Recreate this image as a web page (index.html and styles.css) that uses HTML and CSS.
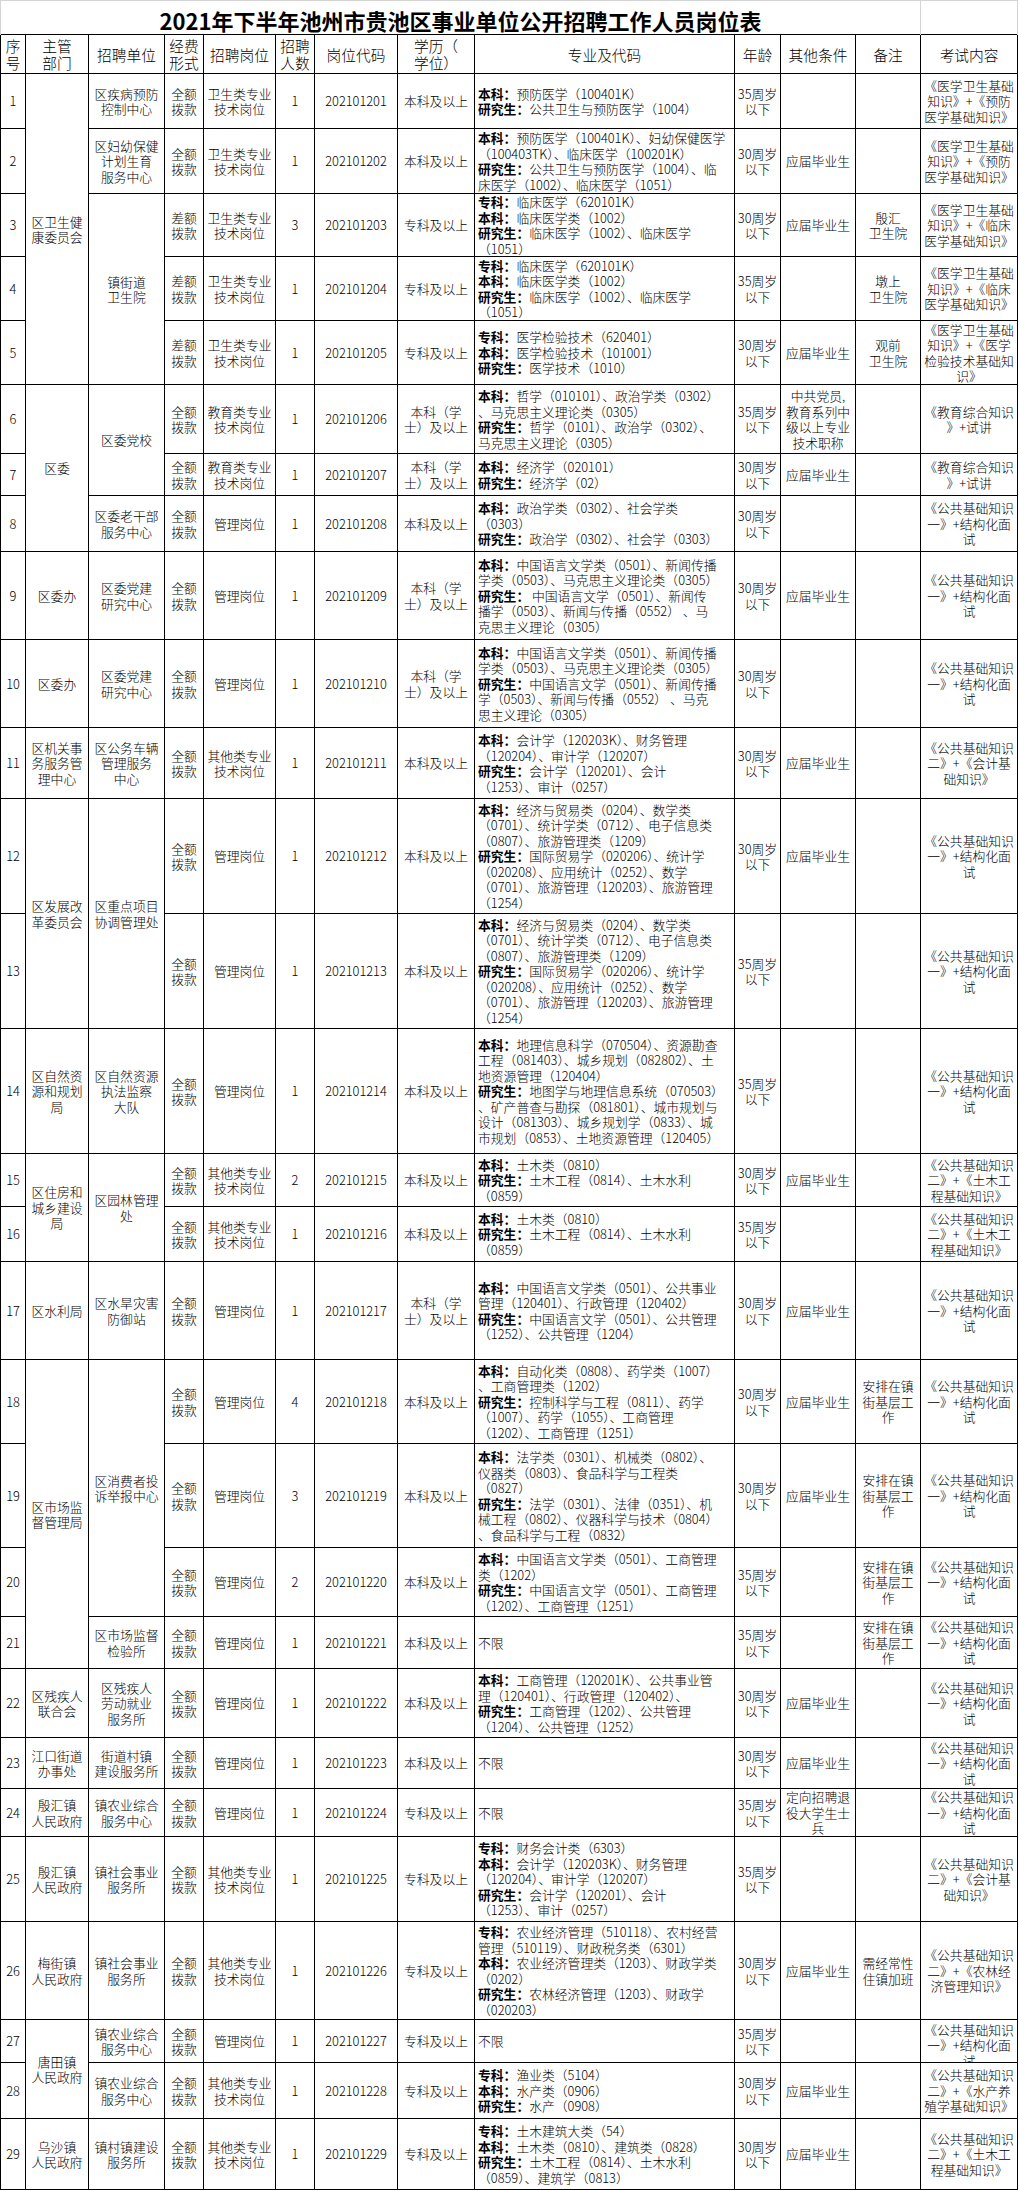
FILE: index.html
```html
<!DOCTYPE html>
<html lang="zh-CN">
<head>
<meta charset="utf-8">
<title>2021年下半年池州市贵池区事业单位公开招聘工作人员岗位表</title>
<link rel="stylesheet" href="styles.css">
</head>
<body>
<table class="sheet">
<colgroup>
<col class="c-no"><col class="c-dept"><col class="c-unit"><col class="c-fund"><col class="c-post"><col class="c-num"><col class="c-code"><col class="c-edu"><col class="c-major"><col class="c-age"><col class="c-other"><col class="c-note"><col class="c-exam">
</colgroup>
<thead>
<tr class="title-row"><td class="title" colspan="12">2021年下半年池州市贵池区事业单位公开招聘工作人员岗位表</td><td class="title-gap"></td></tr>
<tr class="head-row"><th>序<br>号</th><th>主管<br>部门</th><th>招聘单位</th><th>经费<br>形式</th><th>招聘岗位</th><th>招聘<br>人数</th><th>岗位代码</th><th>学历（<br>学位）</th><th>专业及代码</th><th>年龄</th><th>其他条件</th><th>备注</th><th>考试内容</th></tr>
</thead>
<tbody>
<tr><td>1</td><td rowspan="5">区卫生健<br>康委员会</td><td>区疾病预防<br>控制中心</td><td>全额<br>拨款</td><td>卫生类专业<br>技术岗位</td><td>1</td><td>202101201</td><td>本科及以上</td><td class="m"><b>本科：</b>预防医学（100401K）<br><b>研究生：</b>公共卫生与预防医学（1004）</td><td>35周岁<br>以下</td><td></td><td></td><td>《医学卫生基础<br>知识》+《预防<br>医学基础知识》</td></tr>
<tr><td>2</td><td>区妇幼保健<br>计划生育<br>服务中心</td><td>全额<br>拨款</td><td>卫生类专业<br>技术岗位</td><td>1</td><td>202101202</td><td>本科及以上</td><td class="m"><b>本科：</b>预防医学（100401K）、妇幼保健医学<br>（100403TK）、临床医学（100201K）<br><b>研究生：</b>公共卫生与预防医学（1004）、临<br>床医学（1002）、临床医学（1051）</td><td>30周岁<br>以下</td><td>应届毕业生</td><td></td><td>《医学卫生基础<br>知识》+《预防<br>医学基础知识》</td></tr>
<tr><td>3</td><td rowspan="3">镇街道<br>卫生院</td><td>差额<br>拨款</td><td>卫生类专业<br>技术岗位</td><td>3</td><td>202101203</td><td>专科及以上</td><td class="m"><b>专科：</b>临床医学（620101K）<br><b>本科：</b>临床医学类（1002）<br><b>研究生：</b>临床医学（1002）、临床医学<br>（1051）</td><td>30周岁<br>以下</td><td>应届毕业生</td><td>殷汇<br>卫生院</td><td>《医学卫生基础<br>知识》+《临床<br>医学基础知识》</td></tr>
<tr><td>4</td><td>差额<br>拨款</td><td>卫生类专业<br>技术岗位</td><td>1</td><td>202101204</td><td>专科及以上</td><td class="m"><b>专科：</b>临床医学（620101K）<br><b>本科：</b>临床医学类（1002）<br><b>研究生：</b>临床医学（1002）、临床医学<br>（1051）</td><td>35周岁<br>以下</td><td></td><td>墩上<br>卫生院</td><td>《医学卫生基础<br>知识》+《临床<br>医学基础知识》</td></tr>
<tr><td>5</td><td>差额<br>拨款</td><td>卫生类专业<br>技术岗位</td><td>1</td><td>202101205</td><td>专科及以上</td><td class="m"><b>专科：</b>医学检验技术（620401）<br><b>本科：</b>医学检验技术（101001）<br><b>研究生：</b>医学技术（1010）</td><td>30周岁<br>以下</td><td>应届毕业生</td><td>观前<br>卫生院</td><td>《医学卫生基础<br>知识》+《医学<br>检验技术基础知<br>识》</td></tr>
<tr><td>6</td><td rowspan="3">区委</td><td rowspan="2">区委党校</td><td>全额<br>拨款</td><td>教育类专业<br>技术岗位</td><td>1</td><td>202101206</td><td>本科（学<br>士）及以上</td><td class="m"><b>本科：</b>哲学（010101）、政治学类（0302）<br>、马克思主义理论类（0305）<br><b>研究生：</b>哲学（0101）、政治学（0302）、<br>马克思主义理论（0305）</td><td>35周岁<br>以下</td><td>中共党员,<br>教育系列中<br>级以上专业<br>技术职称</td><td></td><td>《教育综合知识<br>》+试讲</td></tr>
<tr><td>7</td><td>全额<br>拨款</td><td>教育类专业<br>技术岗位</td><td>1</td><td>202101207</td><td>本科（学<br>士）及以上</td><td class="m"><b>本科：</b>经济学（020101）<br><b>研究生：</b>经济学（02）</td><td>30周岁<br>以下</td><td>应届毕业生</td><td></td><td>《教育综合知识<br>》+试讲</td></tr>
<tr><td>8</td><td>区委老干部<br>服务中心</td><td>全额<br>拨款</td><td>管理岗位</td><td>1</td><td>202101208</td><td>本科及以上</td><td class="m"><b>本科：</b>政治学类（0302）、社会学类<br>（0303）<br><b>研究生：</b>政治学（0302）、社会学（0303）</td><td>30周岁<br>以下</td><td></td><td></td><td>《公共基础知识<br>一》+结构化面<br>试</td></tr>
<tr><td>9</td><td>区委办</td><td>区委党建<br>研究中心</td><td>全额<br>拨款</td><td>管理岗位</td><td>1</td><td>202101209</td><td>本科（学<br>士）及以上</td><td class="m"><b>本科：</b>中国语言文学类（0501）、新闻传播<br>学类（0503）、马克思主义理论类（0305）<br><b>研究生：</b> 中国语言文学（0501）、新闻传<br>播学（0503）、新闻与传播（0552） 、马<br>克思主义理论（0305）</td><td>30周岁<br>以下</td><td>应届毕业生</td><td></td><td>《公共基础知识<br>一》+结构化面<br>试</td></tr>
<tr><td>10</td><td>区委办</td><td>区委党建<br>研究中心</td><td>全额<br>拨款</td><td>管理岗位</td><td>1</td><td>202101210</td><td>本科（学<br>士）及以上</td><td class="m"><b>本科：</b>中国语言文学类（0501）、新闻传播<br>学类（0503）、马克思主义理论类（0305）<br><b>研究生：</b>中国语言文学（0501）、新闻传播<br>学（0503）、新闻与传播（0552） 、马克<br>思主义理论（0305）</td><td>30周岁<br>以下</td><td></td><td></td><td>《公共基础知识<br>一》+结构化面<br>试</td></tr>
<tr><td>11</td><td>区机关事<br>务服务管<br>理中心</td><td>区公务车辆<br>管理服务<br>中心</td><td>全额<br>拨款</td><td>其他类专业<br>技术岗位</td><td>1</td><td>202101211</td><td>本科及以上</td><td class="m"><b>本科：</b>会计学（120203K）、财务管理<br>（120204）、审计学（120207）<br><b>研究生：</b>会计学（120201）、会计<br>（1253）、审计（0257）</td><td>30周岁<br>以下</td><td>应届毕业生</td><td></td><td>《公共基础知识<br>二》+《会计基<br>础知识》</td></tr>
<tr><td>12</td><td rowspan="2">区发展改<br>革委员会</td><td rowspan="2">区重点项目<br>协调管理处</td><td>全额<br>拨款</td><td>管理岗位</td><td>1</td><td>202101212</td><td>本科及以上</td><td class="m"><b>本科：</b>经济与贸易类（0204）、数学类<br>（0701）、统计学类（0712）、电子信息类<br>（0807）、旅游管理类（1209）<br><b>研究生：</b>国际贸易学（020206）、统计学<br>（020208）、应用统计（0252）、数学<br>（0701）、旅游管理（120203）、旅游管理<br>（1254）</td><td>30周岁<br>以下</td><td>应届毕业生</td><td></td><td>《公共基础知识<br>一》+结构化面<br>试</td></tr>
<tr><td>13</td><td>全额<br>拨款</td><td>管理岗位</td><td>1</td><td>202101213</td><td>本科及以上</td><td class="m"><b>本科：</b>经济与贸易类（0204）、数学类<br>（0701）、统计学类（0712）、电子信息类<br>（0807）、旅游管理类（1209）<br><b>研究生：</b>国际贸易学（020206）、统计学<br>（020208）、应用统计（0252）、数学<br>（0701）、旅游管理（120203）、旅游管理<br>（1254）</td><td>35周岁<br>以下</td><td></td><td></td><td>《公共基础知识<br>一》+结构化面<br>试</td></tr>
<tr><td>14</td><td>区自然资<br>源和规划<br>局</td><td>区自然资源<br>执法监察<br>大队</td><td>全额<br>拨款</td><td>管理岗位</td><td>1</td><td>202101214</td><td>本科及以上</td><td class="m"><b>本科：</b>地理信息科学（070504）、资源勘查<br>工程（081403）、城乡规划（082802）、土<br>地资源管理（120404）<br><b>研究生：</b>地图学与地理信息系统（070503）<br>、矿产普查与勘探（081801）、城市规划与<br>设计（081303）、城乡规划学（0833）、城<br>市规划（0853）、土地资源管理（120405）</td><td>35周岁<br>以下</td><td></td><td></td><td>《公共基础知识<br>一》+结构化面<br>试</td></tr>
<tr><td>15</td><td rowspan="2">区住房和<br>城乡建设<br>局</td><td rowspan="2">区园林管理<br>处</td><td>全额<br>拨款</td><td>其他类专业<br>技术岗位</td><td>2</td><td>202101215</td><td>本科及以上</td><td class="m"><b>本科：</b>土木类（0810）<br><b>研究生：</b>土木工程（0814）、土木水利<br>（0859）</td><td>30周岁<br>以下</td><td>应届毕业生</td><td></td><td>《公共基础知识<br>二》+《土木工<br>程基础知识》</td></tr>
<tr><td>16</td><td>全额<br>拨款</td><td>其他类专业<br>技术岗位</td><td>1</td><td>202101216</td><td>本科及以上</td><td class="m"><b>本科：</b>土木类（0810）<br><b>研究生：</b>土木工程（0814）、土木水利<br>（0859）</td><td>35周岁<br>以下</td><td></td><td></td><td>《公共基础知识<br>二》+《土木工<br>程基础知识》</td></tr>
<tr><td>17</td><td>区水利局</td><td>区水旱灾害<br>防御站</td><td>全额<br>拨款</td><td>管理岗位</td><td>1</td><td>202101217</td><td>本科（学<br>士）及以上</td><td class="m"><b>本科：</b>中国语言文学类（0501）、公共事业<br>管理（120401）、行政管理（120402）<br><b>研究生：</b>中国语言文学（0501）、公共管理<br>（1252）、公共管理（1204）</td><td>30周岁<br>以下</td><td>应届毕业生</td><td></td><td>《公共基础知识<br>一》+结构化面<br>试</td></tr>
<tr><td>18</td><td rowspan="4">区市场监<br>督管理局</td><td rowspan="3">区消费者投<br>诉举报中心</td><td>全额<br>拨款</td><td>管理岗位</td><td>4</td><td>202101218</td><td>本科及以上</td><td class="m"><b>本科：</b>自动化类（0808）、药学类（1007）<br>、工商管理类（1202）<br><b>研究生：</b>控制科学与工程（0811）、药学<br>（1007）、药学（1055）、工商管理<br>（1202）、工商管理（1251）</td><td>30周岁<br>以下</td><td>应届毕业生</td><td>安排在镇<br>街基层工<br>作</td><td>《公共基础知识<br>一》+结构化面<br>试</td></tr>
<tr><td>19</td><td>全额<br>拨款</td><td>管理岗位</td><td>3</td><td>202101219</td><td>本科及以上</td><td class="m"><b>本科：</b>法学类（0301）、机械类（0802）、<br>仪器类（0803）、食品科学与工程类<br>（0827）<br><b>研究生：</b>法学（0301）、法律（0351）、机<br>械工程（0802）、仪器科学与技术（0804）<br>、食品科学与工程（0832）</td><td>30周岁<br>以下</td><td>应届毕业生</td><td>安排在镇<br>街基层工<br>作</td><td>《公共基础知识<br>一》+结构化面<br>试</td></tr>
<tr><td>20</td><td>全额<br>拨款</td><td>管理岗位</td><td>2</td><td>202101220</td><td>本科及以上</td><td class="m"><b>本科：</b>中国语言文学类（0501）、工商管理<br>类（1202）<br><b>研究生：</b>中国语言文学（0501）、工商管理<br>（1202）、工商管理（1251）</td><td>35周岁<br>以下</td><td></td><td>安排在镇<br>街基层工<br>作</td><td>《公共基础知识<br>一》+结构化面<br>试</td></tr>
<tr><td>21</td><td>区市场监督<br>检验所</td><td>全额<br>拨款</td><td>管理岗位</td><td>1</td><td>202101221</td><td>本科及以上</td><td class="m">不限</td><td>35周岁<br>以下</td><td></td><td>安排在镇<br>街基层工<br>作</td><td>《公共基础知识<br>一》+结构化面<br>试</td></tr>
<tr><td>22</td><td>区残疾人<br>联合会</td><td>区残疾人<br>劳动就业<br>服务所</td><td>全额<br>拨款</td><td>管理岗位</td><td>1</td><td>202101222</td><td>本科及以上</td><td class="m"><b>本科：</b>工商管理（120201K）、公共事业管<br>理（120401）、行政管理（120402）、<br><b>研究生：</b>工商管理（1202）、公共管理<br>（1204）、公共管理（1252）</td><td>30周岁<br>以下</td><td>应届毕业生</td><td></td><td>《公共基础知识<br>一》+结构化面<br>试</td></tr>
<tr><td>23</td><td>江口街道<br>办事处</td><td>街道村镇<br>建设服务所</td><td>全额<br>拨款</td><td>管理岗位</td><td>1</td><td>202101223</td><td>本科及以上</td><td class="m">不限</td><td>30周岁<br>以下</td><td>应届毕业生</td><td></td><td>《公共基础知识<br>一》+结构化面<br>试</td></tr>
<tr><td>24</td><td>殷汇镇<br>人民政府</td><td>镇农业综合<br>服务中心</td><td>全额<br>拨款</td><td>管理岗位</td><td>1</td><td>202101224</td><td>专科及以上</td><td class="m">不限</td><td>35周岁<br>以下</td><td>定向招聘退<br>役大学生士<br>兵</td><td></td><td>《公共基础知识<br>一》+结构化面<br>试</td></tr>
<tr><td>25</td><td>殷汇镇<br>人民政府</td><td>镇社会事业<br>服务所</td><td>全额<br>拨款</td><td>其他类专业<br>技术岗位</td><td>1</td><td>202101225</td><td>专科及以上</td><td class="m"><b>专科：</b>财务会计类（6303）<br><b>本科：</b>会计学（120203K）、财务管理<br>（120204）、审计学（120207）<br><b>研究生：</b>会计学（120201）、会计<br>（1253）、审计（0257）</td><td>35周岁<br>以下</td><td></td><td></td><td>《公共基础知识<br>二》+《会计基<br>础知识》</td></tr>
<tr><td>26</td><td>梅街镇<br>人民政府</td><td>镇社会事业<br>服务所</td><td>全额<br>拨款</td><td>其他类专业<br>技术岗位</td><td>1</td><td>202101226</td><td>专科及以上</td><td class="m"><b>专科：</b>农业经济管理（510118）、农村经营<br>管理（510119）、财政税务类（6301）<br><b>本科：</b>农业经济管理类（1203）、财政学类<br>（0202）<br><b>研究生：</b>农林经济管理（1203）、财政学<br>（020203）</td><td>30周岁<br>以下</td><td>应届毕业生</td><td>需经常性<br>住镇加班</td><td>《公共基础知识<br>二》+《农林经<br>济管理知识》</td></tr>
<tr><td>27</td><td rowspan="2">唐田镇<br>人民政府</td><td>镇农业综合<br>服务中心</td><td>全额<br>拨款</td><td>管理岗位</td><td>1</td><td>202101227</td><td>专科及以上</td><td class="m">不限</td><td>35周岁<br>以下</td><td></td><td></td><td><div class="clip">《公共基础知识<br>一》+结构化面<br>试</div></td></tr>
<tr><td>28</td><td>镇农业综合<br>服务中心</td><td>全额<br>拨款</td><td>其他类专业<br>技术岗位</td><td>1</td><td>202101228</td><td>专科及以上</td><td class="m"><b>专科：</b>渔业类（5104）<br><b>本科：</b>水产类（0906）<br><b>研究生：</b>水产（0908）</td><td>30周岁<br>以下</td><td>应届毕业生</td><td></td><td>《公共基础知识<br>二》+《水产养<br>殖学基础知识》</td></tr>
<tr><td>29</td><td>乌沙镇<br>人民政府</td><td>镇村镇建设<br>服务所</td><td>全额<br>拨款</td><td>其他类专业<br>技术岗位</td><td>1</td><td>202101229</td><td>专科及以上</td><td class="m"><b>专科：</b>土木建筑大类（54）<br><b>本科：</b>土木类（0810）、建筑类（0828）<br><b>研究生：</b>土木工程（0814）、土木水利<br>（0859）、建筑学（0813）</td><td>30周岁<br>以下</td><td>应届毕业生</td><td></td><td>《公共基础知识<br>二》+《土木工<br>程基础知识》</td></tr>
</tbody>
</table>
</body>
</html>
```

FILE: styles.css
```css
* { box-sizing: border-box; }

body {
  margin: 0;
  background: #ffffff;
}

.sheet {
  border-collapse: collapse;
  table-layout: fixed;
  width: 1017px;
  font-family: "Noto Sans CJK SC", "Noto Sans CJK JP", sans-serif;
  font-size: 12.8px;
  font-weight: 300;
  line-height: 15.5px;
  color: #000000;
}

.c-no { width: 25px; }
.c-dept { width: 63px; }
.c-unit { width: 76px; }
.c-fund { width: 39px; }
.c-post { width: 72px; }
.c-num { width: 39px; }
.c-code { width: 83px; }
.c-edu { width: 77px; }
.c-major { width: 260px; }
.c-age { width: 46px; }
.c-other { width: 75px; }
.c-note { width: 65px; }
.c-exam { width: 97px; }

.sheet td,
.sheet th {
  border: 1px solid #000000;
  padding: 0 1px;
  text-align: center;
  vertical-align: middle;
  font-weight: 300;
  white-space: nowrap;
}

.sheet .title-row td {
  height: 34px;
  border: 1px solid #d4d4d4;
  border-bottom: none;
  font-size: 22px;
  line-height: 26px;
  font-weight: bold;
  padding-top: 4px;
}

.sheet .head-row th {
  height: 39px;
  font-size: 14.7px;
  line-height: 17px;
}

.sheet td.m {
  text-align: left;
  padding-left: 3px;
}

.sheet td.m b {
  font-weight: bold;
}

.clip {
  height: 41px;
  overflow: hidden;
  padding-top: 1px;
}

tbody tr:nth-child(1) { height: 55px; }
tbody tr:nth-child(2) { height: 65px; }
tbody tr:nth-child(3) { height: 63px; }
tbody tr:nth-child(4) { height: 64px; }
tbody tr:nth-child(5) { height: 64px; }
tbody tr:nth-child(6) { height: 69px; }
tbody tr:nth-child(7) { height: 42px; }
tbody tr:nth-child(8) { height: 56px; }
tbody tr:nth-child(9) { height: 88px; }
tbody tr:nth-child(10) { height: 88px; }
tbody tr:nth-child(11) { height: 71px; }
tbody tr:nth-child(12) { height: 115px; }
tbody tr:nth-child(13) { height: 115px; }
tbody tr:nth-child(14) { height: 125px; }
tbody tr:nth-child(15) { height: 53px; }
tbody tr:nth-child(16) { height: 55px; }
tbody tr:nth-child(17) { height: 98px; }
tbody tr:nth-child(18) { height: 84px; }
tbody tr:nth-child(19) { height: 104px; }
tbody tr:nth-child(20) { height: 69px; }
tbody tr:nth-child(21) { height: 52px; }
tbody tr:nth-child(22) { height: 69px; }
tbody tr:nth-child(23) { height: 51px; }
tbody tr:nth-child(24) { height: 48px; }
tbody tr:nth-child(25) { height: 85px; }
tbody tr:nth-child(26) { height: 98px; }
tbody tr:nth-child(27) { height: 43px; }
tbody tr:nth-child(28) { height: 56px; }
tbody tr:nth-child(29) { height: 71px; }
```
